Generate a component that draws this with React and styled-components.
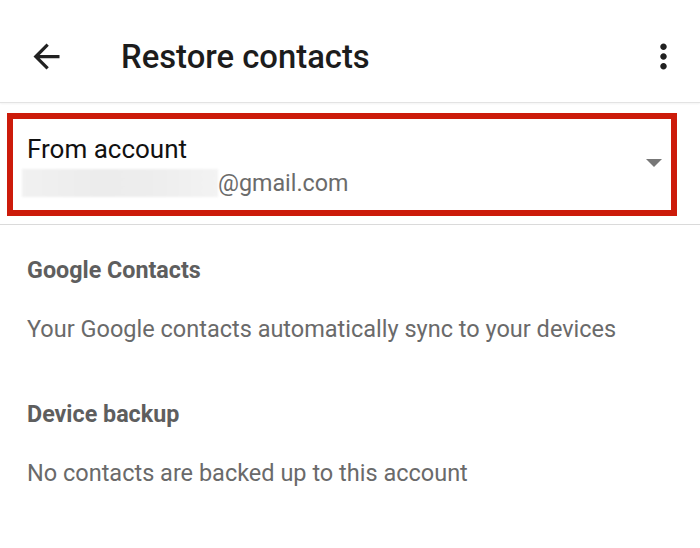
import React from 'react'
import styled, { createGlobalStyle } from 'styled-components'

const GlobalStyle = createGlobalStyle`
  html, body {
    margin: 0;
    padding: 0;
    background: #fff;
  }
  body {
    font-family: Roboto, "Liberation Sans", Arial, sans-serif;
    -webkit-font-smoothing: antialiased;
  }
  * {
    box-sizing: border-box;
  }
`

const Page = styled.div`
  width: 700px;
  height: 548px;
  background: #fff;
  overflow: hidden;
`

const Toolbar = styled.header`
  height: 103px;
  padding: 11px 17px 0 27px;
  display: flex;
  align-items: center;
  border-bottom: 1px solid #e3e3e3;
  box-shadow: 0 1px 2px rgba(0, 0, 0, 0.05);
`

const IconButton = styled.div`
  width: 39px;
  height: 39px;
  display: flex;
  align-items: center;
  justify-content: center;
  color: #212121;
  flex-shrink: 0;

  svg {
    width: 39px;
    height: 39px;
    display: block;
  }
`

const Title = styled.h1`
  margin: 0 0 0 55px;
  flex: 1;
  font-size: 32.8px;
  font-weight: 500;
  color: #1c1c1c;
  line-height: 40px;
  letter-spacing: 0;
`

const AccountPicker = styled.div`
  margin: 10px 23px 0 7px;
  height: 103px;
  border: 6px solid #cc1b0a;
  display: flex;
  align-items: center;
  justify-content: space-between;
  padding: 0 9px 0 14px;
`

const AccountText = styled.div`
  display: flex;
  flex-direction: column;
  padding-top: 2px;
`

const AccountLabel = styled.div`
  font-size: 26px;
  line-height: 32px;
  color: #111;
`

const AccountEmail = styled.div`
  display: flex;
  align-items: center;
  margin-top: 2px;
  margin-left: -5px;
  font-size: 23.3px;
  line-height: 32px;
  color: #6b6b6b;
`

const Redacted = styled.span`
  width: 196px;
  height: 28px;
  background: linear-gradient(90deg, #f1f1f1 0%, #ececec 40%, #eeeeee 70%, #f3f3f3 100%);
  filter: blur(1px);
`

const Caret = styled.span`
  width: 0;
  height: 0;
  border-left: 8px solid transparent;
  border-right: 8px solid transparent;
  border-top: 8px solid #777;
  margin-top: -4px;
`

const Divider = styled.div`
  margin-top: 8px;
  height: 1px;
  background: #dadada;
`

const Content = styled.div`
  padding: 31px 27px 0;
  display: flex;
  flex-direction: column;
  gap: 57px;
`

const Section = styled.section`
  display: flex;
  flex-direction: column;
  gap: 31px;
`

const SectionTitle = styled.div`
  font-size: 23.3px;
  line-height: 28px;
  font-weight: 700;
  color: #5e5e5e;
`

const SectionText = styled.div`
  font-size: 23.5px;
  line-height: 28px;
  color: #6a6a6a;
`

const ArrowBack = () => (
  <svg viewBox="0 0 24 24" fill="currentColor">
    <path d="M20 11H7.83l5.59-5.59L12 4l-8 8 8 8 1.41-1.41L7.83 13H20v-2z" />
  </svg>
)

const MoreVert = () => (
  <svg viewBox="0 0 24 24" fill="currentColor">
    <path d="M12 8c1.1 0 2-.9 2-2s-.9-2-2-2-2 .9-2 2 .9 2 2 2zm0 2c-1.1 0-2 .9-2 2s.9 2 2 2 2-.9 2-2-.9-2-2-2zm0 6c-1.1 0-2 .9-2 2s.9 2 2 2 2-.9 2-2-.9-2-2-2z" />
  </svg>
)

const sections = [
  {
    title: 'Google Contacts',
    text: 'Your Google contacts automatically sync to your devices'
  },
  {
    title: 'Device backup',
    text: 'No contacts are backed up to this account'
  }
]

const App = () => (
  <Page>
    <GlobalStyle />
    <Toolbar>
      <IconButton>
        <ArrowBack />
      </IconButton>
      <Title>Restore contacts</Title>
      <IconButton>
        <MoreVert />
      </IconButton>
    </Toolbar>
    <AccountPicker>
      <AccountText>
        <AccountLabel>From account</AccountLabel>
        <AccountEmail>
          <Redacted />
          @gmail.com
        </AccountEmail>
      </AccountText>
      <Caret />
    </AccountPicker>
    <Divider />
    <Content>
      {sections.map(s => (
        <Section key={s.title}>
          <SectionTitle>{s.title}</SectionTitle>
          <SectionText>{s.text}</SectionText>
        </Section>
      ))}
    </Content>
  </Page>
)

export default App
